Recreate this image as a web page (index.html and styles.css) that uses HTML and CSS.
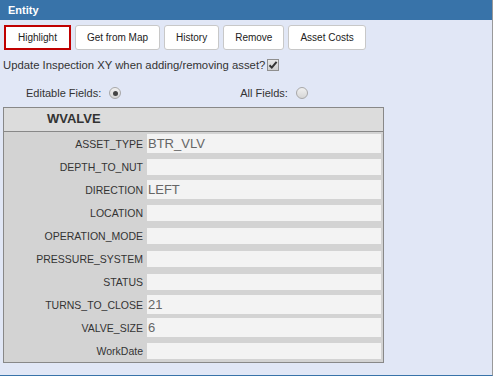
FILE: index.html
```html
<!DOCTYPE html>
<html lang="en">

<head>
    <meta charset="UTF-8">
    <meta name="viewport" content="width=device-width, initial-scale=1.0">
    <title>Entity</title>

    <link rel="stylesheet" href="styles.css">
</head>

<body>
    <div class="panel">
        <div class="panel-title">Entity</div>

        <!-- Action buttons -->
        <div class="toolbar">
            <button class="btn btn-active">Highlight</button>
            <button class="btn">Get from Map</button>
            <button class="btn">History</button>
            <button class="btn">Remove</button>
            <button class="btn">Asset Costs</button>
        </div>

        <div class="option-line">
            <span>Update Inspection XY when adding/removing asset?</span>
            <span class="check checked">
                <svg width="10" height="10" viewBox="0 0 10 10">
                    <path d="M1.5 5.2 L3.8 7.6 L8.6 1.8" fill="none" stroke="#333" stroke-width="2" />
                </svg>
            </span>
        </div>

        <div class="field-mode">
            <label class="mode">Editable Fields: <span class="radio checked"></span></label>
            <label class="mode mode-all">All Fields: <span class="radio"></span></label>
        </div>

        <!-- Attribute table -->
        <div class="attr-table">
            <div class="attr-head">WVALVE</div>
            <div class="attr-row">
                <div class="attr-name">ASSET_TYPE</div>
                <div class="attr-value filled">BTR_VLV</div>
            </div>
            <div class="attr-row">
                <div class="attr-name">DEPTH_TO_NUT</div>
                <div class="attr-value"></div>
            </div>
            <div class="attr-row">
                <div class="attr-name">DIRECTION</div>
                <div class="attr-value filled">LEFT</div>
            </div>
            <div class="attr-row">
                <div class="attr-name">LOCATION</div>
                <div class="attr-value"></div>
            </div>
            <div class="attr-row">
                <div class="attr-name">OPERATION_MODE</div>
                <div class="attr-value"></div>
            </div>
            <div class="attr-row">
                <div class="attr-name">PRESSURE_SYSTEM</div>
                <div class="attr-value"></div>
            </div>
            <div class="attr-row">
                <div class="attr-name">STATUS</div>
                <div class="attr-value"></div>
            </div>
            <div class="attr-row">
                <div class="attr-name">TURNS_TO_CLOSE</div>
                <div class="attr-value filled">21</div>
            </div>
            <div class="attr-row">
                <div class="attr-name">VALVE_SIZE</div>
                <div class="attr-value filled">6</div>
            </div>
            <div class="attr-row">
                <div class="attr-name">WorkDate</div>
                <div class="attr-value"></div>
            </div>
        </div>
    </div>
</body>

</html>
```

FILE: styles.css
```css
body {
    margin: 0;
    font-family: "Liberation Sans", Arial, sans-serif;
    color: #333;
    background: #fff;
}

.panel {
    width: 492px;
    height: 375px;
    background: #e1e7f6;
    border-right: 1px solid #999;
    border-bottom: 1px solid #3873a9;
}

.panel-title {
    height: 20px;
    line-height: 20px;
    padding-left: 8px;
    background: #3873a9;
    color: #fff;
    font-size: 11px;
    font-weight: bold;
}

.toolbar {
    display: flex;
    gap: 4px;
    padding: 5px 0 0 4px;
}

.btn {
    height: 25px;
    padding: 0 11px;
    background: #fff;
    border: 1px solid #c8c8c8;
    border-radius: 3px;
    font-family: inherit;
    font-size: 10px;
    color: #222;
}

.btn-active {
    border: 2px solid #c00000;
    border-radius: 0;
    padding: 0 12px;
}

.option-line {
    display: flex;
    align-items: center;
    gap: 2px;
    height: 18px;
    margin-top: 6px;
    padding-left: 3px;
    font-size: 11.3px;
}

.check {
    display: inline-flex;
    align-items: center;
    justify-content: center;
    width: 10px;
    height: 10px;
    border: 1px solid #8f8f8f;
    background: linear-gradient(#e8e8e8, #cfcfcf);
}

.field-mode {
    display: flex;
    align-items: center;
    height: 20px;
    margin-top: 9px;
    font-size: 11px;
}

.mode {
    display: flex;
    align-items: center;
    gap: 8px;
    margin-left: 26px;
}

.mode-all {
    margin-left: 119px;
}

.radio {
    display: inline-flex;
    align-items: center;
    justify-content: center;
    width: 10px;
    height: 10px;
    border: 1px solid #a8a8a8;
    border-radius: 50%;
    background: linear-gradient(#f0f0f0, #d6d6d6);
}

.radio.checked::after {
    content: "";
    width: 5px;
    height: 5px;
    border-radius: 50%;
    background: #444;
}

.attr-table {
    width: 379px;
    margin: 4px 0 0 3px;
    border: 1px solid #888;
    background: #d3d3d3;
}

.attr-head {
    height: 23px;
    line-height: 22px;
    padding-left: 43px;
    background: #dcdcdc;
    border-bottom: 1px solid #888;
    font-size: 13px;
    font-weight: bold;
}

.attr-row {
    display: grid;
    grid-template-columns: 140px 234px;
    column-gap: 3px;
    align-items: center;
    height: 23px;
}

.attr-name {
    padding-right: 1px;
    text-align: right;
    font-size: 10.5px;
}

.attr-value {
    height: 16px;
    line-height: 16px;
    padding-left: 1px;
    background: #f3f3f3;
    font-size: 13px;
    color: #666;
}

.attr-value.filled {
    height: 19px;
    line-height: 19px;
}
```
